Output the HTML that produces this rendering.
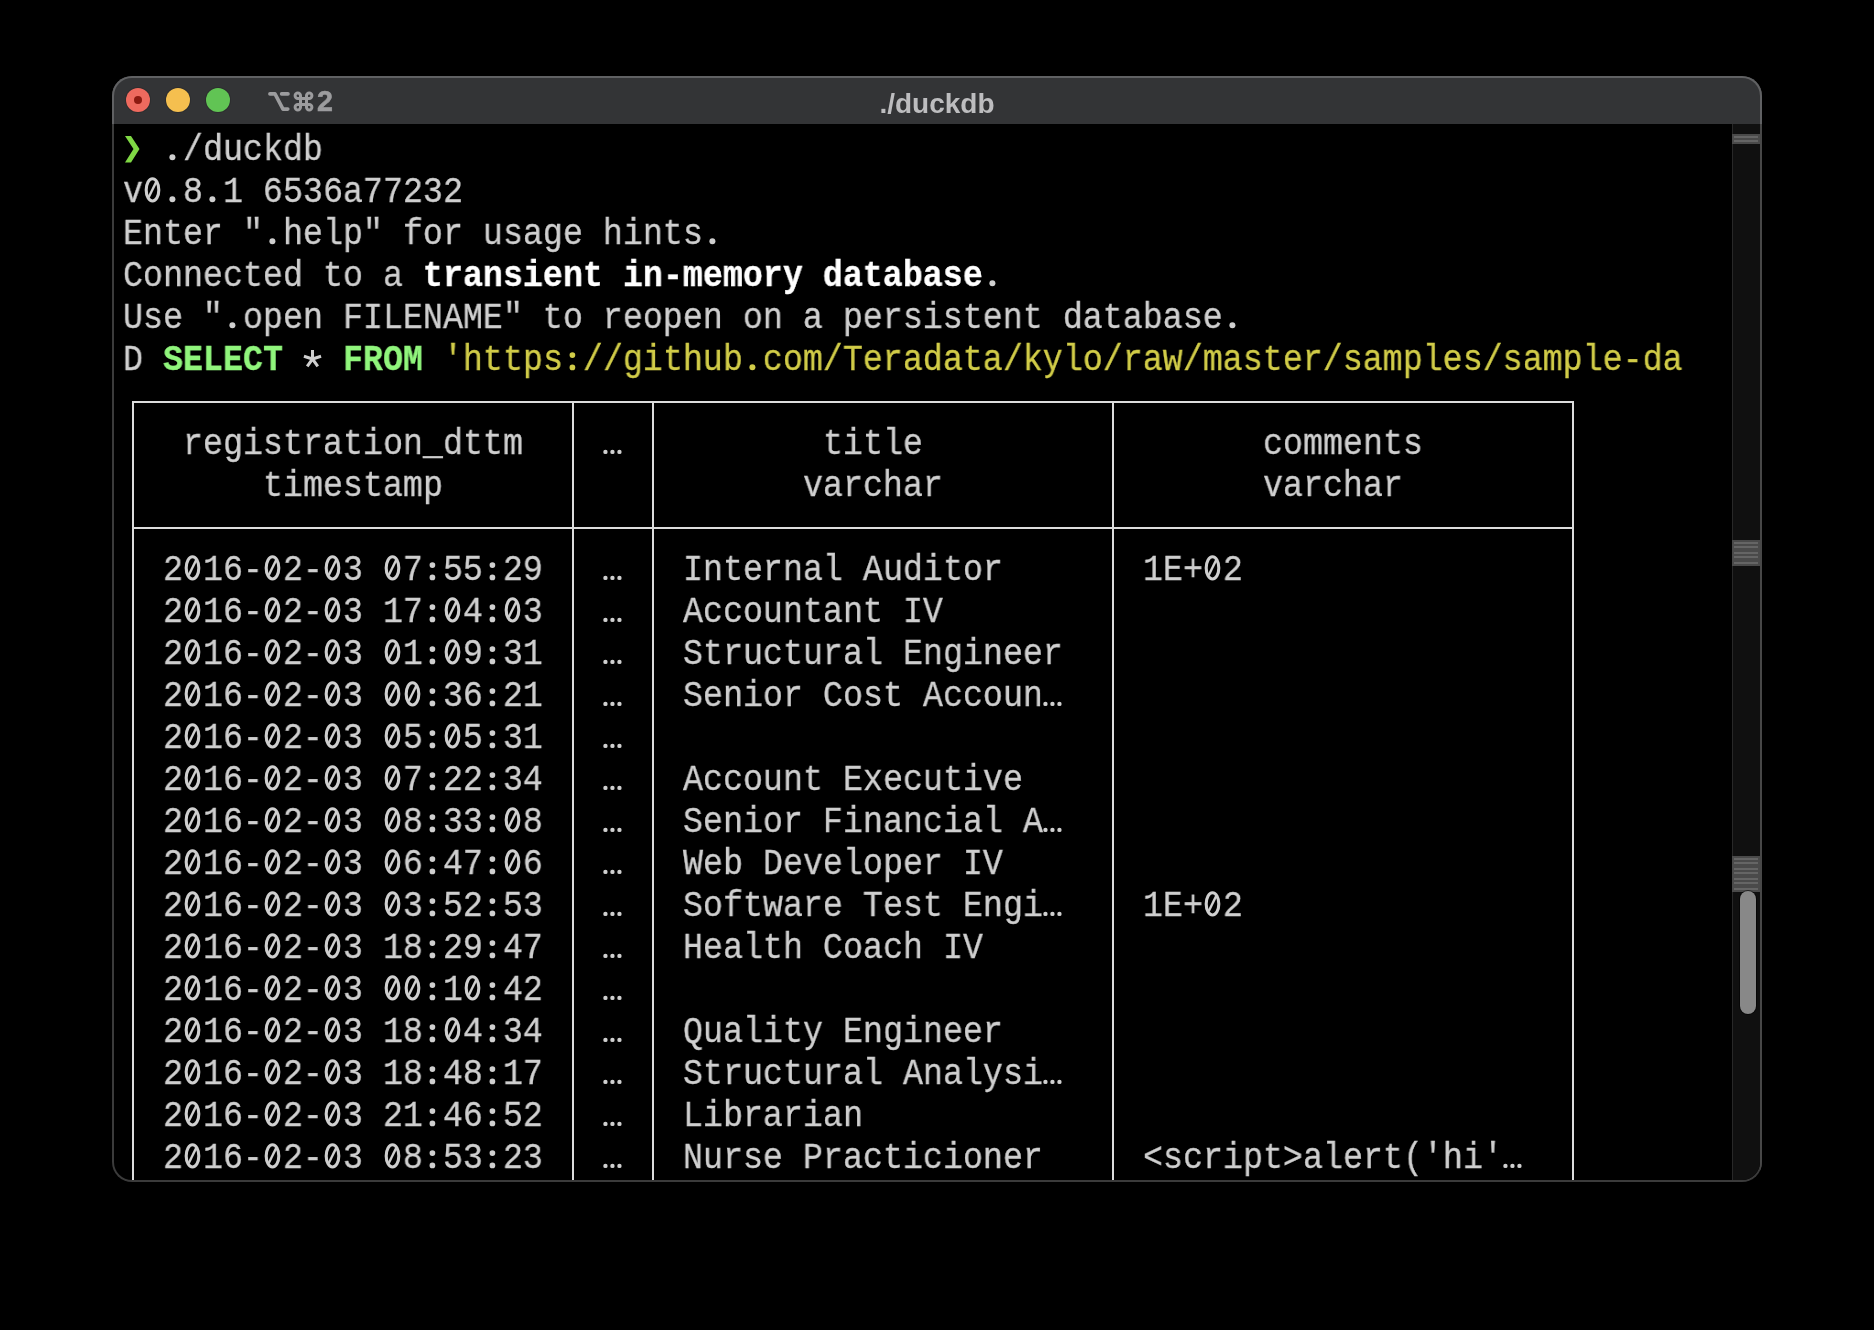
<!DOCTYPE html>
<html><head><meta charset="utf-8"><style>
html,body{margin:0;padding:0;background:#000;}
body{width:1874px;height:1330px;position:relative;overflow:hidden;}
#win{position:absolute;left:112px;top:76px;width:1650px;height:1106px;border-radius:20px;background:#3b3b3b;overflow:hidden;}
#tbb{position:absolute;left:0;top:0;width:1650px;height:48px;background:#606163;}
#tb{position:absolute;left:2px;top:2px;width:1646px;height:46px;background:#333436;border-radius:18px 18px 0 0;}
#term{position:absolute;left:2px;top:48px;width:1646px;height:1056px;background:#000;border-radius:0 0 18px 18px;overflow:hidden;}
.abs{position:absolute;}
.t{position:absolute;white-space:pre;font-family:"Liberation Mono",monospace;font-size:36.4px;line-height:42px;height:42px;transform:scaleX(0.9156018920054722);transform-origin:0 0;-webkit-text-stroke:0.3px currentColor;color:#cfcfcf;will-change:transform;}
.b{color:#fff;font-weight:bold;}
.g{color:#90f57c;font-weight:bold;}
.y{color:#d1cc48;}
.ln{position:absolute;background:#dcdcdc;}
.el{position:absolute;fill:#cfcfcf;}
.dot{position:absolute;width:24px;height:24px;border-radius:50%;box-shadow:0 0 0 1px rgba(0,0,0,0.14);}
.mk{position:absolute;left:1618px;width:28px;background:#4a4a4a;}
.ml{position:absolute;left:1620px;width:24px;height:2px;background:#656565;}
</style></head><body>
<div id="win"><div class="abs" style="left:1648px;top:48px;width:2px;height:1058px;background:#474747"></div><div id="tbb"></div><div id="tb"></div><div id="term"><div class="abs" style="left:1618px;top:0px;width:1px;height:1056px;background:#282828"></div>
<div class="abs" style="left:1619px;top:0px;width:27px;height:1056px;background:#101010"></div>
<div class="mk" style="top:10px;height:10px"></div><div class="ml" style="top:12px"></div><div class="ml" style="top:16px"></div><div class="mk" style="top:416px;height:26px"></div><div class="ml" style="top:418px"></div><div class="ml" style="top:422px"></div><div class="ml" style="top:428px"></div><div class="ml" style="top:432px"></div><div class="ml" style="top:438px"></div><div class="mk" style="top:732px;height:36px"></div><div class="ml" style="top:734px"></div><div class="ml" style="top:738px"></div><div class="ml" style="top:744px"></div><div class="ml" style="top:748px"></div><div class="ml" style="top:754px"></div><div class="ml" style="top:758px"></div><div class="ml" style="top:764px"></div>
<div class="abs" style="left:1626px;top:767px;width:16px;height:123px;border-radius:8px;background:#888;box-shadow:0 0 0 1px rgba(0,0,0,0.55)"></div></div></div>
<div class="dot" style="left:126px;top:88px;background:#ee6a5e;"></div>
<div class="abs" style="left:134px;top:96px;width:8px;height:8px;border-radius:50%;background:#8c1a10;"></div>
<div class="dot" style="left:166px;top:88px;background:#f5bf4f;"></div>
<div class="dot" style="left:206px;top:88px;background:#61c454;"></div>
<svg class="abs" style="left:0;top:0" width="340" height="124" viewBox="0 0 340 124"><g fill="none" stroke="#9c9c9e" stroke-width="3.6" stroke-linecap="round" stroke-linejoin="round"><path d="M269.9,93.9 H275 L283,109.1 H287.8 M281.6,93.9 H288"/><path d="M300.5,98.5 H306.5 V104.5 H300.5 Z M300.5,98.5 V95.8 A2.7,2.7 0 1 0 297.8,98.5 H300.5 M306.5,98.5 V95.8 A2.7,2.7 0 1 1 309.2,98.5 H306.5 M306.5,104.5 V107.2 A2.7,2.7 0 1 0 309.2,104.5 H306.5 M300.5,104.5 V107.2 A2.7,2.7 0 1 1 297.8,104.5 H300.5" stroke-width="3"/></g></svg>
<div class="abs" style="left:317px;top:83px;font-family:'Liberation Sans',sans-serif;font-weight:bold;font-size:28.6px;line-height:36px;color:#9c9c9e;white-space:pre;-webkit-text-stroke:0.6px #9c9c9e;will-change:transform">2</div>
<div class="abs" style="left:0;width:1874px;top:86px;text-align:center;font-family:'Liberation Sans',sans-serif;font-weight:bold;font-size:28px;line-height:36px;color:#bdbdbf;will-change:transform;"><span style="position:relative;left:0px">./duckdb</span></div>

<svg class="abs" style="left:123px;top:129px" width="20" height="42" viewBox="0 0 20 42"><polygon points="2,7 8,7 16.5,20 8,33.5 2,33.5 10.5,20" fill="#7fd844"/></svg>
<div class="t" style="top:172px;left:123px">v  8 1 6536a77232</div>
<div class="t" style="top:214px;left:123px">Enter " help" for usage hints </div>
<div class="t" style="top:256px;left:123px">Connected to a <span class="b">transient in-memory database</span> </div>
<div class="t" style="top:298px;left:123px">Use " open FILENAME" to reopen on a persistent database </div>
<div class="t" style="top:340px;left:123px">D <span class="g">SELECT</span>   <span class="g">FROM</span> <span class="y">'https //github com/Teradata/kylo/raw/master/samples/sample-da</span></div>
<div class="t" style="top:130px;left:163px"> /duckdb</div>
<div class="t" style="top:424px;left:183px">registration_dttm</div>
<div class="t" style="top:424px;left:603px"> </div>
<div class="t" style="top:424px;left:823px">title</div>
<div class="t" style="top:424px;left:1263px">comments</div>
<div class="t" style="top:466px;left:263px">timestamp</div>
<div class="t" style="top:466px;left:803px">varchar</div>
<div class="t" style="top:466px;left:1263px">varchar</div>
<div class="t" style="top:550px;left:163px">2 16- 2- 3  7 55 29</div>
<div class="t" style="top:550px;left:603px"> </div>
<div class="t" style="top:550px;left:683px">Internal Auditor</div>
<div class="t" style="top:550px;left:1143px">1E+ 2</div>
<div class="t" style="top:592px;left:163px">2 16- 2- 3 17  4  3</div>
<div class="t" style="top:592px;left:603px"> </div>
<div class="t" style="top:592px;left:683px">Accountant IV</div>
<div class="t" style="top:634px;left:163px">2 16- 2- 3  1  9 31</div>
<div class="t" style="top:634px;left:603px"> </div>
<div class="t" style="top:634px;left:683px">Structural Engineer</div>
<div class="t" style="top:676px;left:163px">2 16- 2- 3    36 21</div>
<div class="t" style="top:676px;left:603px"> </div>
<div class="t" style="top:676px;left:683px">Senior Cost Accoun </div>
<div class="t" style="top:718px;left:163px">2 16- 2- 3  5  5 31</div>
<div class="t" style="top:718px;left:603px"> </div>
<div class="t" style="top:760px;left:163px">2 16- 2- 3  7 22 34</div>
<div class="t" style="top:760px;left:603px"> </div>
<div class="t" style="top:760px;left:683px">Account Executive</div>
<div class="t" style="top:802px;left:163px">2 16- 2- 3  8 33  8</div>
<div class="t" style="top:802px;left:603px"> </div>
<div class="t" style="top:802px;left:683px">Senior Financial A </div>
<div class="t" style="top:844px;left:163px">2 16- 2- 3  6 47  6</div>
<div class="t" style="top:844px;left:603px"> </div>
<div class="t" style="top:844px;left:683px">Web Developer IV</div>
<div class="t" style="top:886px;left:163px">2 16- 2- 3  3 52 53</div>
<div class="t" style="top:886px;left:603px"> </div>
<div class="t" style="top:886px;left:683px">Software Test Engi </div>
<div class="t" style="top:886px;left:1143px">1E+ 2</div>
<div class="t" style="top:928px;left:163px">2 16- 2- 3 18 29 47</div>
<div class="t" style="top:928px;left:603px"> </div>
<div class="t" style="top:928px;left:683px">Health Coach IV</div>
<div class="t" style="top:970px;left:163px">2 16- 2- 3    1  42</div>
<div class="t" style="top:970px;left:603px"> </div>
<div class="t" style="top:1012px;left:163px">2 16- 2- 3 18  4 34</div>
<div class="t" style="top:1012px;left:603px"> </div>
<div class="t" style="top:1012px;left:683px">Quality Engineer</div>
<div class="t" style="top:1054px;left:163px">2 16- 2- 3 18 48 17</div>
<div class="t" style="top:1054px;left:603px"> </div>
<div class="t" style="top:1054px;left:683px">Structural Analysi </div>
<div class="t" style="top:1096px;left:163px">2 16- 2- 3 21 46 52</div>
<div class="t" style="top:1096px;left:603px"> </div>
<div class="t" style="top:1096px;left:683px">Librarian</div>
<div class="t" style="top:1138px;left:163px">2 16- 2- 3  8 53 23</div>
<div class="t" style="top:1138px;left:603px"> </div>
<div class="t" style="top:1138px;left:683px">Nurse Practicioner</div>
<div class="t" style="top:1138px;left:1143px">&lt;script&gt;alert('hi' </div>
<svg class="abs" style="left:0;top:0;color:#cfcfcf" width="1874" height="1330"><defs><g id="ell" fill="currentColor"><circle cx="2.45" cy="28.9" r="2.2"/><circle cx="9.45" cy="28.9" r="2.2"/><circle cx="16.45" cy="28.9" r="2.2"/></g><g id="per" fill="currentColor"><circle cx="9.4" cy="28.3" r="3"/></g><g id="col" fill="currentColor"><circle cx="9.4" cy="16.1" r="2.85"/><circle cx="9.4" cy="28.4" r="2.85"/></g><g id="zero" fill="none" stroke="currentColor"><ellipse cx="9.5" cy="18.9" rx="6.3" ry="11.1" stroke-width="3.1"/><line x1="5.7" y1="26.3" x2="13.8" y2="9.7" stroke-width="2.4"/></g><g id="ast" fill="none" stroke="currentColor" stroke-width="3"><path d="M9.5,20 V11 M9.5,20 L18.06,17.22 M9.5,20 L0.94,17.22 M9.5,20 L14.79,27.28 M9.5,20 L4.21,27.28"/></g></defs><use href="#zero" x="143" y="171"/><use href="#per" x="163" y="171"/><use href="#per" x="203" y="171"/><use href="#per" x="263" y="213"/><use href="#per" x="703" y="213"/><use href="#per" x="983" y="255"/><use href="#per" x="223" y="297"/><use href="#per" x="1223" y="297"/><use href="#ast" x="303" y="339"/><use href="#col" x="563" y="339" style="color:#d1cc48"/><use href="#per" x="743" y="339" style="color:#d1cc48"/><use href="#per" x="163" y="129"/><use href="#ell" x="603" y="423"/><use href="#zero" x="183" y="549"/><use href="#zero" x="263" y="549"/><use href="#zero" x="323" y="549"/><use href="#zero" x="383" y="549"/><use href="#col" x="423" y="549"/><use href="#col" x="483" y="549"/><use href="#ell" x="603" y="549"/><use href="#zero" x="1203" y="549"/><use href="#zero" x="183" y="591"/><use href="#zero" x="263" y="591"/><use href="#zero" x="323" y="591"/><use href="#col" x="423" y="591"/><use href="#zero" x="443" y="591"/><use href="#col" x="483" y="591"/><use href="#zero" x="503" y="591"/><use href="#ell" x="603" y="591"/><use href="#zero" x="183" y="633"/><use href="#zero" x="263" y="633"/><use href="#zero" x="323" y="633"/><use href="#zero" x="383" y="633"/><use href="#col" x="423" y="633"/><use href="#zero" x="443" y="633"/><use href="#col" x="483" y="633"/><use href="#ell" x="603" y="633"/><use href="#zero" x="183" y="675"/><use href="#zero" x="263" y="675"/><use href="#zero" x="323" y="675"/><use href="#zero" x="383" y="675"/><use href="#zero" x="403" y="675"/><use href="#col" x="423" y="675"/><use href="#col" x="483" y="675"/><use href="#ell" x="603" y="675"/><use href="#ell" x="1043" y="675"/><use href="#zero" x="183" y="717"/><use href="#zero" x="263" y="717"/><use href="#zero" x="323" y="717"/><use href="#zero" x="383" y="717"/><use href="#col" x="423" y="717"/><use href="#zero" x="443" y="717"/><use href="#col" x="483" y="717"/><use href="#ell" x="603" y="717"/><use href="#zero" x="183" y="759"/><use href="#zero" x="263" y="759"/><use href="#zero" x="323" y="759"/><use href="#zero" x="383" y="759"/><use href="#col" x="423" y="759"/><use href="#col" x="483" y="759"/><use href="#ell" x="603" y="759"/><use href="#zero" x="183" y="801"/><use href="#zero" x="263" y="801"/><use href="#zero" x="323" y="801"/><use href="#zero" x="383" y="801"/><use href="#col" x="423" y="801"/><use href="#col" x="483" y="801"/><use href="#zero" x="503" y="801"/><use href="#ell" x="603" y="801"/><use href="#ell" x="1043" y="801"/><use href="#zero" x="183" y="843"/><use href="#zero" x="263" y="843"/><use href="#zero" x="323" y="843"/><use href="#zero" x="383" y="843"/><use href="#col" x="423" y="843"/><use href="#col" x="483" y="843"/><use href="#zero" x="503" y="843"/><use href="#ell" x="603" y="843"/><use href="#zero" x="183" y="885"/><use href="#zero" x="263" y="885"/><use href="#zero" x="323" y="885"/><use href="#zero" x="383" y="885"/><use href="#col" x="423" y="885"/><use href="#col" x="483" y="885"/><use href="#ell" x="603" y="885"/><use href="#ell" x="1043" y="885"/><use href="#zero" x="1203" y="885"/><use href="#zero" x="183" y="927"/><use href="#zero" x="263" y="927"/><use href="#zero" x="323" y="927"/><use href="#col" x="423" y="927"/><use href="#col" x="483" y="927"/><use href="#ell" x="603" y="927"/><use href="#zero" x="183" y="969"/><use href="#zero" x="263" y="969"/><use href="#zero" x="323" y="969"/><use href="#zero" x="383" y="969"/><use href="#zero" x="403" y="969"/><use href="#col" x="423" y="969"/><use href="#zero" x="463" y="969"/><use href="#col" x="483" y="969"/><use href="#ell" x="603" y="969"/><use href="#zero" x="183" y="1011"/><use href="#zero" x="263" y="1011"/><use href="#zero" x="323" y="1011"/><use href="#col" x="423" y="1011"/><use href="#zero" x="443" y="1011"/><use href="#col" x="483" y="1011"/><use href="#ell" x="603" y="1011"/><use href="#zero" x="183" y="1053"/><use href="#zero" x="263" y="1053"/><use href="#zero" x="323" y="1053"/><use href="#col" x="423" y="1053"/><use href="#col" x="483" y="1053"/><use href="#ell" x="603" y="1053"/><use href="#ell" x="1043" y="1053"/><use href="#zero" x="183" y="1095"/><use href="#zero" x="263" y="1095"/><use href="#zero" x="323" y="1095"/><use href="#col" x="423" y="1095"/><use href="#col" x="483" y="1095"/><use href="#ell" x="603" y="1095"/><use href="#zero" x="183" y="1137"/><use href="#zero" x="263" y="1137"/><use href="#zero" x="323" y="1137"/><use href="#zero" x="383" y="1137"/><use href="#col" x="423" y="1137"/><use href="#col" x="483" y="1137"/><use href="#ell" x="603" y="1137"/><use href="#ell" x="1503" y="1137"/></svg>
<div class="ln" style="left:132px;top:401px;width:2px;height:779px"></div>
<div class="ln" style="left:572px;top:401px;width:2px;height:779px"></div>
<div class="ln" style="left:652px;top:401px;width:2px;height:779px"></div>
<div class="ln" style="left:1112px;top:401px;width:2px;height:779px"></div>
<div class="ln" style="left:1572px;top:401px;width:2px;height:779px"></div>
<div class="ln" style="left:132px;top:401px;width:1442px;height:2px"></div>
<div class="ln" style="left:132px;top:527px;width:1442px;height:2px"></div>
</body></html>
